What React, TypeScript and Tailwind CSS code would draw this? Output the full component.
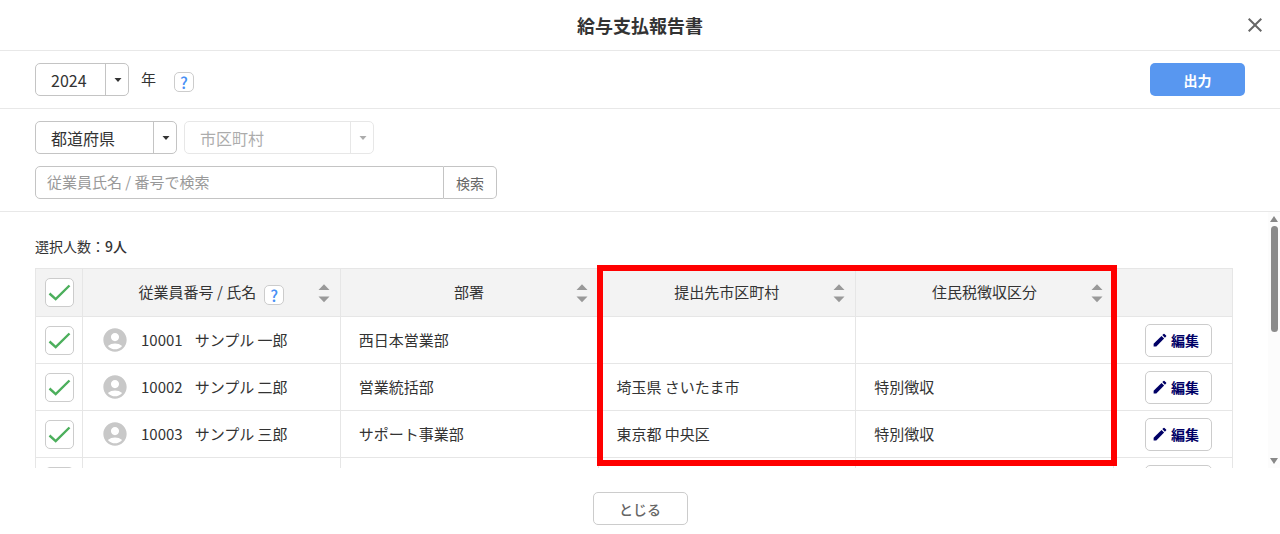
import { useState } from 'react';
import type { ReactNode } from 'react';
import { MdAccountCircle, MdClose } from 'react-icons/md';

type Employee = {
  id: string;
  name: string;
  department: string;
  city: string;
  taxType: string;
};

const employees: Employee[] = [
  { id: '10001', name: 'サンプル 一郎', department: '西日本営業部', city: '', taxType: '' },
  { id: '10002', name: 'サンプル 二郎', department: '営業統括部', city: '埼玉県 さいたま市', taxType: '特別徴収' },
  { id: '10003', name: 'サンプル 三郎', department: 'サポート事業部', city: '東京都 中央区', taxType: '特別徴収' },
  { id: '10004', name: '', department: '', city: '', taxType: '' },
];

const cellClass = 'border border-[#e6e6e6] px-[18px]';

// ---------------------------------------------------------------------------
// Form controls
// ---------------------------------------------------------------------------

type SelectBoxProps = {
  label: string;
  options: string[];
  className: string;
  disabled?: boolean;
};

function SelectBox({ label, options, className, disabled }: SelectBoxProps) {
  return (
    <div className={`relative h-[33px] ${disabled ? 'opacity-40' : ''} ${className}`}>
      <select
        aria-label={label}
        disabled={disabled}
        className="block h-full w-full appearance-none rounded-[5px] border border-[#c4c4c4] bg-white pr-6 pl-[15px] text-base text-[#333]"
      >
        {options.map((option) => (
          <option key={option}>{option}</option>
        ))}
      </select>
      <span className="pointer-events-none absolute inset-y-0 right-0 flex w-6 items-center justify-center border-l border-[#c4c4c4]">
        <svg viewBox="0 0 8 4" className="h-1 w-2 fill-[#333]">
          <path d="M0.5 0h7L4 4z" />
        </svg>
      </span>
    </div>
  );
}

function HelpButton() {
  return (
    <button
      type="button"
      aria-label="ヘルプ"
      className="mt-1 flex h-5 w-5 items-center justify-center rounded-[5px] border border-[#ccc] bg-white text-base font-medium text-[#4990f5]"
    >
      ?
    </button>
  );
}

function CheckBox({ label }: { label: string }) {
  const [checked, setChecked] = useState(true);

  return (
    <span className="relative mx-auto block h-[29px] w-[29px]">
      <input
        type="checkbox"
        aria-label={label}
        checked={checked}
        onChange={() => setChecked(!checked)}
        className="block h-full w-full appearance-none rounded-[5px] border border-[#ccc] bg-white"
      />
      {checked && (
        <svg viewBox="0 0 29 29" className="pointer-events-none absolute inset-0 fill-none stroke-[#4caf5c]">
          <path strokeWidth="2.4" d="M4.500 15.500l6.200 5.700L24.500 7.500" />
        </svg>
      )}
    </span>
  );
}

function PencilIcon() {
  return (
    <svg viewBox="0 0 14 14" className="h-3.5 w-3.5 fill-[#000066]">
      <path d="M0.600 13.400v-2.700L8.500 2.900l2.600 2.600-7.800 7.900z" />
      <path d="M9.300 2.100l1.200-1.200q.5-.5 1 0l1.600 1.600q.5.5 0 1l-1.200 1.200z" />
    </svg>
  );
}

// ---------------------------------------------------------------------------
// Table
// ---------------------------------------------------------------------------

function SortHeader({ children }: { children: ReactNode }) {
  return (
    <th className="border border-[#e6e6e6] pr-2 font-normal">
      <div className="flex items-center">
        <span className="flex flex-1 items-center justify-center gap-2 pl-6">{children}</span>
        <button type="button" aria-label="並び替え" className="w-4">
          <svg viewBox="0 0 16 20" className="h-5 w-4 fill-[#999]">
            <path d="M2.500 7L8 1.200 13.500 7zM2.500 13.500h11L8 19.300z" />
          </svg>
        </button>
      </div>
    </th>
  );
}

function EmployeeRow({ employee }: { employee: Employee }) {
  return (
    <tr className="h-[47px]">
      <td className="border border-[#e6e6e6]">
        <CheckBox label={`${employee.id}を選択`} />
      </td>
      <td className={cellClass}>
        <div className="flex items-center gap-3">
          <MdAccountCircle className="h-7 w-7 text-[#c8c8c8]" />
          <span>{employee.id}</span>
          <span>{employee.name}</span>
        </div>
      </td>
      <td className={cellClass}>{employee.department}</td>
      <td className={cellClass}>{employee.city}</td>
      <td className={cellClass}>{employee.taxType}</td>
      <td className="border border-[#e6e6e6] pr-5">
        <button
          type="button"
          className="ml-auto flex h-[33px] items-center gap-1 rounded-[5px] border border-[#ccc] bg-white pr-3 pl-[7px] text-sm font-bold text-[#000066]"
        >
          <PencilIcon />
          編集
        </button>
      </td>
    </tr>
  );
}

function EmployeeTable() {
  return (
    <div className="relative">
      <table className="w-full table-fixed border-collapse text-[15px]">
        <colgroup>
          <col className="w-[47px]" />
          <col />
          <col />
          <col />
          <col />
          <col className="w-[119px]" />
        </colgroup>
        <thead>
          <tr className="h-12 bg-[#f3f3f3]">
            <th className="border border-[#e6e6e6]">
              <CheckBox label="すべて選択" />
            </th>
            <SortHeader>
              従業員番号 / 氏名
              <HelpButton />
            </SortHeader>
            <SortHeader>部署</SortHeader>
            <SortHeader>提出先市区町村</SortHeader>
            <SortHeader>住民税徴収区分</SortHeader>
            <th className="border border-[#e6e6e6]" />
          </tr>
        </thead>
        <tbody>
          {employees.map((employee) => (
            <EmployeeRow key={employee.id} employee={employee} />
          ))}
        </tbody>
      </table>
      {/* highlight around the city and tax columns */}
      <div className="pointer-events-none absolute -top-[3px] right-[116px] left-[calc(50%-37px)] h-[201px] border-[6px] border-[#ff0000]" />
    </div>
  );
}

function ScrollBar() {
  return (
    <div className="flex w-3 flex-col items-center gap-1 bg-[#fcfcfc] py-1">
      <svg viewBox="0 0 8 6" className="h-1.5 w-2 fill-[#888]">
        <path d="M4 0l4 6H0z" />
      </svg>
      <div className="h-[106px] w-[7px] rounded-full bg-[#8b8b8b]" />
      <svg viewBox="0 0 8 6" className="mt-auto h-1.5 w-2 fill-[#888]">
        <path d="M0 0h8L4 6z" />
      </svg>
    </div>
  );
}

// ---------------------------------------------------------------------------
// App
// ---------------------------------------------------------------------------

export default function App() {
  return (
    <div className="flex flex-col bg-white font-['Noto_Sans_CJK_JP',sans-serif] text-[#333]">
      <header className="grid grid-cols-[1fr_auto_1fr] items-center border-b border-[#e8e8e8] px-[13px] py-3">
        <h1 className="col-start-2 text-lg leading-[26px] font-bold">給与支払報告書</h1>
        <button type="button" aria-label="閉じる" className="justify-self-end">
          <MdClose className="h-6 w-6 text-[#666]" />
        </button>
      </header>

      <div className="flex items-center border-b border-[#e8e8e8] px-[35px] py-3">
        <SelectBox label="対象年" options={['2024', '2023']} className="w-[94px]" />
        <span className="mr-[18px] ml-3 text-[15px]">年</span>
        <HelpButton />
        <button type="button" className="ml-auto h-[33px] w-[95px] rounded-[5px] bg-[#5897f0] text-sm font-bold text-white">
          出力
        </button>
      </div>

      <div className="flex flex-col gap-3 border-b border-[#e8e8e8] px-[35px] py-3">
        <div className="flex gap-[7px]">
          <SelectBox label="都道府県" options={['都道府県']} className="w-[142px]" />
          <SelectBox label="市区町村" options={['市区町村']} className="w-[190px]" disabled />
        </div>
        <form className="flex h-[33px] w-[462px]">
          <input
            type="text"
            aria-label="従業員検索"
            placeholder="従業員氏名 / 番号で検索"
            className="min-w-0 flex-1 rounded-l-[5px] border border-[#c4c4c4] px-[11px] text-[15px] placeholder:text-[#999]"
          />
          <button type="button" className="rounded-r-[5px] border border-l-0 border-[#c4c4c4] px-3 text-sm text-[#666]">
            検索
          </button>
        </form>
      </div>

      <main className="flex h-64 overflow-hidden">
        <div className="min-w-0 flex-1 pt-6 pr-[35px] pl-[35px]">
          <p className="mb-3 text-sm">
            選択人数：<strong className="font-medium">9人</strong>
          </p>
          <EmployeeTable />
        </div>
        <ScrollBar />
      </main>

      <footer className="flex justify-center py-6">
        <button type="button" className="h-[33px] w-[95px] rounded-[5px] border border-[#ccc] text-sm font-medium text-[#666]">
          とじる
        </button>
      </footer>
    </div>
  );
}
